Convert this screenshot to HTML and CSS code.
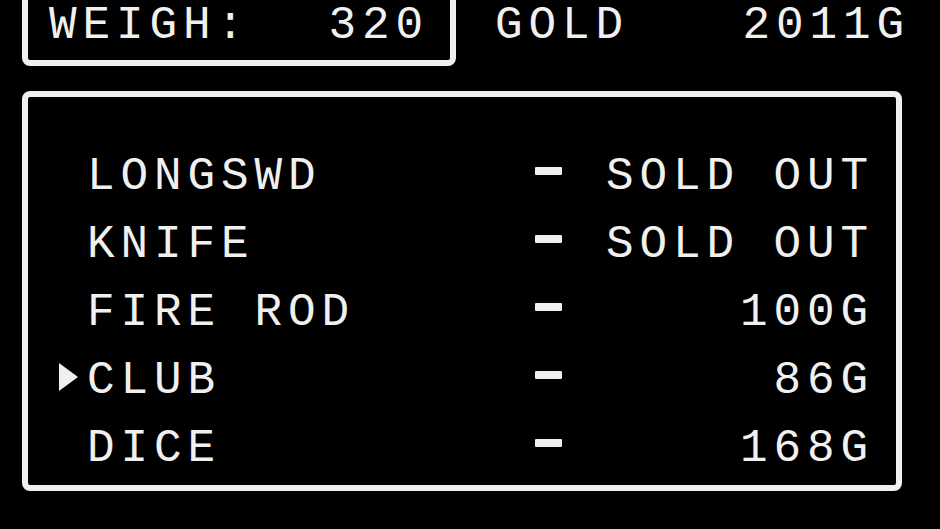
FILE: index.html
```html
<!DOCTYPE html>
<html lang="en">
<head>
  <meta charset="UTF-8">
  <title>Shop</title>
  <meta name="viewport" content="width=device-width, initial-scale=1">
  <link rel="stylesheet" href="styles.css">
</head>
<body>

  <header class="status">
    <div class="panel weigh">
      <span>WEIGH:</span>
      <span>320</span>
    </div>
    <div class="gold">
      <span>GOLD</span>
      <span>2011G</span>
    </div>
  </header>

  <section class="panel shop">
    <ul class="items">
      <li class="item"><span class="cursor"></span><span class="name">LONGSWD</span><span class="dash"></span><span class="price">SOLD OUT</span></li>
      <li class="item"><span class="cursor"></span><span class="name">KNIFE</span><span class="dash"></span><span class="price">SOLD OUT</span></li>
      <li class="item"><span class="cursor"></span><span class="name">FIRE ROD</span><span class="dash"></span><span class="price">100G</span></li>
      <li class="item selected"><span class="cursor"></span><span class="name">CLUB</span><span class="dash"></span><span class="price">86G</span></li>
      <li class="item"><span class="cursor"></span><span class="name">DICE</span><span class="dash"></span><span class="price">168G</span></li>
    </ul>
  </section>

</body>
</html>
```

FILE: styles.css
```css
* { margin: 0; padding: 0; box-sizing: border-box; }
body {
  background: #000;
  color: #f0f0f0;
  font-family: "Liberation Mono", monospace;
  font-size: 46px;
  letter-spacing: 5.9px;
  overflow: hidden;
}
.panel {
  border: 6px solid #f0f0f0;
  border-radius: 8px;
}

/* top row: weight box and gold counter */
.status {
  display: flex;
  align-items: flex-start;
  height: 91px;
}
.weigh {
  width: 434px;
  height: 97px;
  margin: -31px 0 0 22px;
  padding: 0 21px 10px 21px;
  display: flex;
  justify-content: space-between;
  align-items: flex-end;
  line-height: 48px;
}
.gold {
  flex: 1;
  display: flex;
  justify-content: space-between;
  line-height: 48px;
  margin: 2px 30px 0 39px;
}

/* shop list */
.shop {
  margin-left: 22px;
  width: 880px;
  height: 400px;
  padding: 46px 22px 0 31px;
}
.items { list-style: none; }
.item {
  display: grid;
  grid-template-columns: 28px 448px 27px 1fr;
  height: 68px;
  line-height: 68px;
}
.price { text-align: right; }
.dash {
  height: 8px;
  margin-top: 24px;
  background: #f0f0f0;
  border-radius: 1px;
}
.cursor {
  width: 0;
  height: 0;
  margin-top: 16px;
}
.selected .cursor {
  border-left: 19px solid #f0f0f0;
  border-top: 14px solid transparent;
  border-bottom: 14px solid transparent;
}
```
